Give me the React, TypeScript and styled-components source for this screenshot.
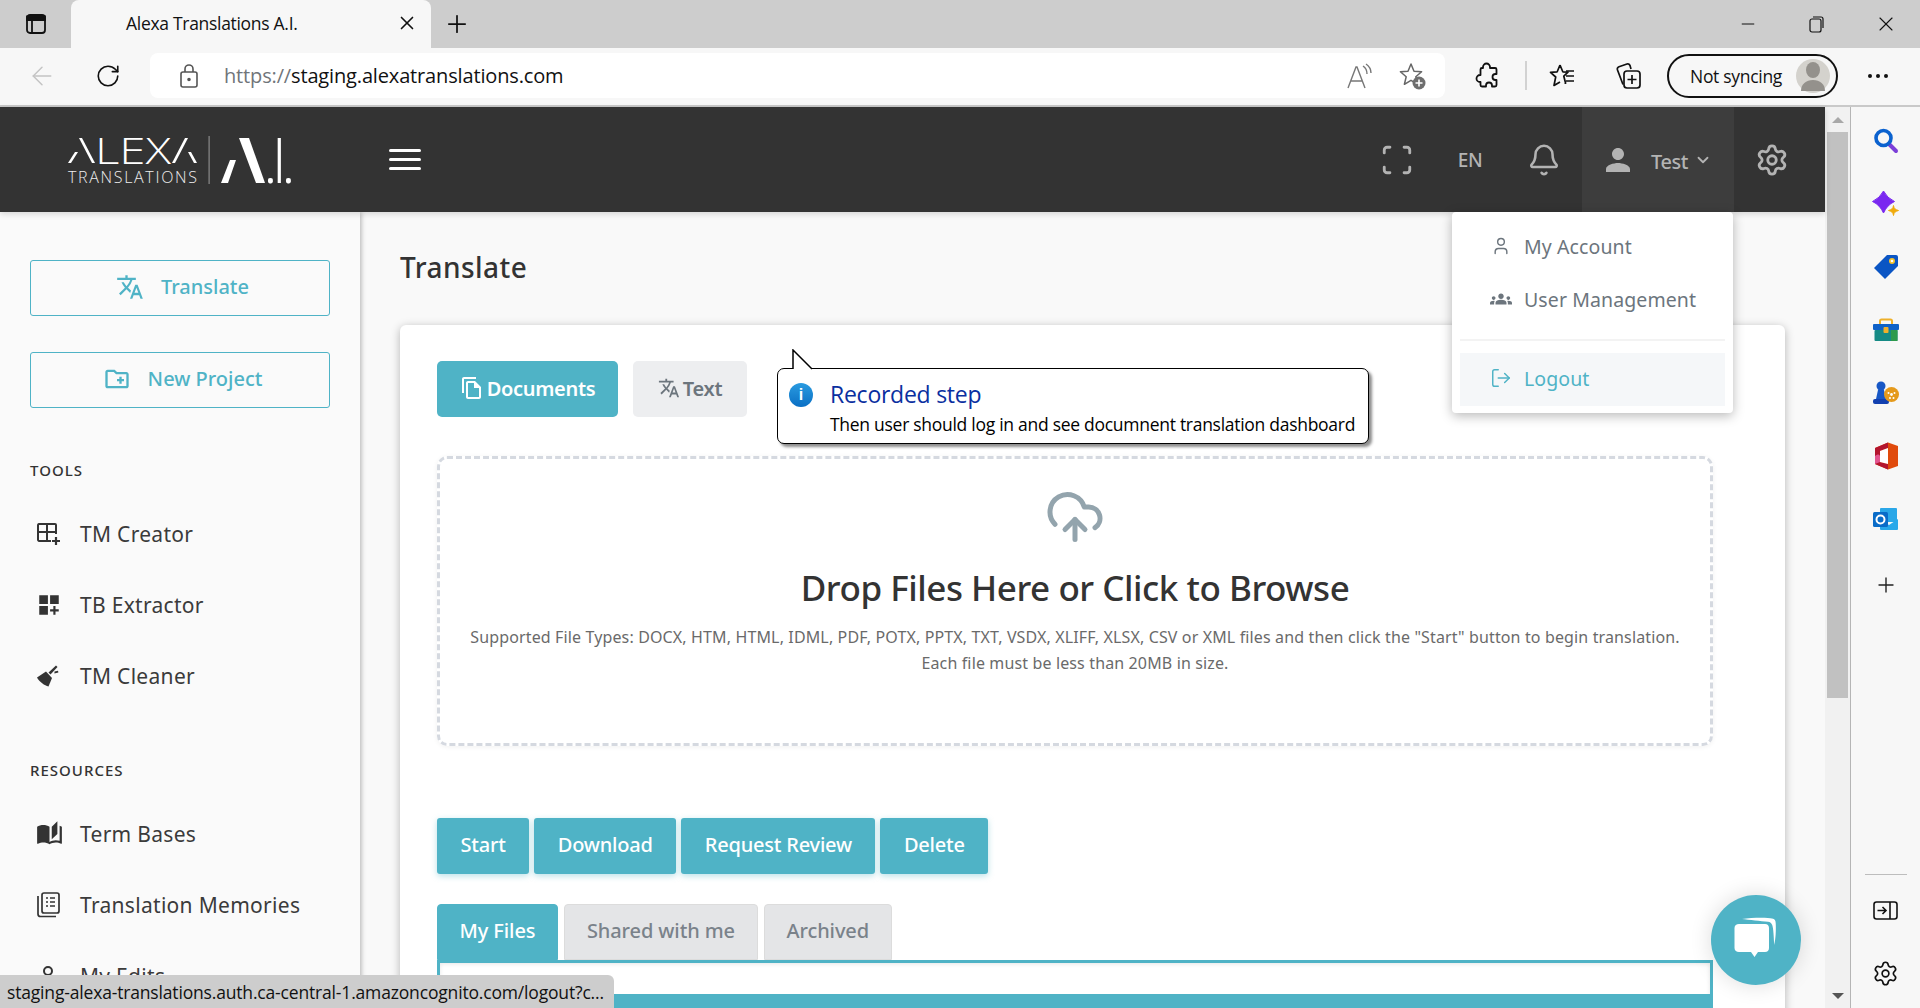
import React, { FC, ReactNode } from 'react'
import styled, { createGlobalStyle } from 'styled-components'
import { ArrowLeft, Bell, ChevronDown, CloudUpload, LogOut, Minus, Plus, RotateCw, Scan, Settings, User, X } from 'lucide-react'
import { MdAutoStories, MdDashboardCustomize, MdGroups, MdOutlineCreateNewFolder, MdOutlineFileCopy, MdPerson, MdTranslate } from 'react-icons/md'

const teal = '#4fb3c6'
const appFont = `'Noto Sans', 'Open Sans', sans-serif`
const chromeFont = `'Open Sans', 'Noto Sans', sans-serif`

const GlobalStyle = createGlobalStyle`
	html, body {
		margin: 0;
		padding: 0;
		overflow: hidden;
		background: #fff;
	}
	* {
		box-sizing: border-box;
	}
`

const Window = styled.div`
	position: relative;
	width: 1920px;
	height: 1008px;
	display: flex;
	flex-direction: column;
	overflow: hidden;
	font-family: ${appFont};
`

/* browser chrome */
const TabStrip = styled.div`
	height: 48px;
	flex: none;
	display: flex;
	align-items: center;
	background: #cdcdcd;
	color: #111;
`
const TabSwitcher = styled.div`
	width: 71px;
	display: flex;
	justify-content: center;
`
const ActiveTab = styled.div`
	width: 360px;
	height: 48px;
	display: flex;
	align-items: center;
	padding: 0 13px 2px 55px;
	background: #f7f7f7;
	border-radius: 8px 8px 0 0;
	font: 400 17.5px ${chromeFont};
	letter-spacing: -0.3px;
	justify-content: space-between;
`
const NewTab = styled.div`
	margin-left: 12px;
	display: flex;
`
const WindowControls = styled.div`
	margin-left: auto;
	display: flex;
	align-items: center;
`
const WindowControl = styled.div`
	width: 69px;
	display: flex;
	justify-content: center;
`
const Toolbar = styled.div`
	height: 59px;
	flex: none;
	display: flex;
	align-items: center;
	background: #f7f7f7;
	border-bottom: 2px solid #c9c9c9;
	padding-bottom: 2px;
	color: #111;
`
const ToolButton = styled.div<{ $w: number; $muted?: boolean }>`
	width: ${p => p.$w}px;
	flex: none;
	display: flex;
	justify-content: center;
	align-items: center;
	color: ${p => (p.$muted ? '#c4c4c4' : 'inherit')};
`
const AddressBar = styled.div`
	width: 1295px;
	height: 45px;
	flex: none;
	margin: 0 3px 0 18px;
	display: flex;
	align-items: center;
	background: #fff;
	border-radius: 8px;
	padding: 0 4px 0 29px;
`
const Url = styled.div`
	margin-left: 25px;
	font: 400 20px ${chromeFont};
	letter-spacing: -0.15px;
	color: #111;
	flex: 1;
	span {
		color: #70757a;
	}
`
const ToolDivider = styled.div`
	width: 2px;
	height: 29px;
	flex: none;
	background: #d2d2d2;
`
const ProfileButton = styled.div`
	width: 171px;
	height: 44px;
	flex: none;
	margin-left: 8px;
	display: flex;
	align-items: center;
	justify-content: space-between;
	padding: 0 6px 0 21px;
	border: 2px solid #111;
	border-radius: 22px;
	font: 400 17.5px ${chromeFont};
	letter-spacing: -0.3px;
`
const Avatar = styled.div`
	width: 34px;
	height: 34px;
	border-radius: 50%;
	background: #d4d2cd;
	display: flex;
	align-items: center;
	justify-content: center;
`
const Viewport = styled.div`
	flex: 1;
	min-height: 0;
	display: flex;
`
const PageArea = styled.div`
	flex: 1;
	min-width: 0;
	display: flex;
	flex-direction: column;
`

/* app header */
const AppHeader = styled.header`
	height: 105px;
	flex: none;
	display: flex;
	align-items: center;
	padding: 0 15px 0 60px;
	background: #333;
	color: #b3b3b3;
	z-index: 3;
	box-shadow: 0 2px 6px rgba(0, 0, 0, 0.15);
`
const LogoMark = styled.svg`
	overflow: visible;
	flex: none;
`
const MenuButton = styled.div`
	margin-left: 79px;
	width: 32px;
	display: flex;
	flex-direction: column;
	gap: 6px;
`
const MenuBar = styled.span`
	height: 3px;
	border-radius: 2px;
	background: #fff;
`
const HeaderRight = styled.div`
	margin-left: auto;
	display: flex;
	align-items: stretch;
	height: 100%;
`
const HeaderCell = styled.div<{ $w: number }>`
	width: ${p => p.$w}px;
	display: flex;
	align-items: center;
	justify-content: center;
`
const LangLabel = styled.span`
	font-size: 19px;
	font-weight: 500;
	letter-spacing: -0.3px;
`
const UserCell = styled.div`
	position: relative;
	width: 152px;
	display: flex;
	align-items: center;
	padding-left: 18px;
	background: #3d3d3d;
`
const UserName = styled.span`
	margin-left: 15px;
	margin-right: 6px;
	font-size: 20px;
	font-weight: 500;
	letter-spacing: -0.4px;
	padding-top: 3px;
`

/* user dropdown */
const UserMenu = styled.div`
	position: absolute;
	top: 100%;
	right: 1px;
	width: 281px;
	height: 201px;
	padding: 8px;
	background: #fff;
	border-radius: 4px;
	box-shadow: 0 3px 12px rgba(0, 0, 0, 0.28);
`
const UserMenuItem = styled.div<{ $accent?: boolean }>`
	height: 53px;
	display: flex;
	align-items: center;
	padding: 0 0 ${p => (p.$accent ? 3 : 1)}px 30px;
	gap: 12px;
	font-size: 19.5px;
	letter-spacing: 0.1px;
	color: ${p => (p.$accent ? teal : '#6c757d')};
	background: ${p => (p.$accent ? '#f5f7f9' : 'transparent')};
`
const UserMenuIcon = styled.span`
	width: 22px;
	display: flex;
	justify-content: center;
`
const UserMenuDivider = styled.div`
	height: 2px;
	background: #f3f3f3;
	margin: 13px 0 12px;
`

/* sidebar */
const Content = styled.div`
	flex: 1;
	min-height: 0;
	display: flex;
`
const Sidebar = styled.aside`
	width: 360px;
	flex: none;
	padding: 48px 30px 0;
	background: #fafafa;
	box-shadow: 1px 0 5px rgba(0, 0, 0, 0.3);
	z-index: 2;
`
const OutlineButton = styled.div`
	height: 56px;
	display: flex;
	align-items: center;
	justify-content: center;
	gap: 17px;
	margin-bottom: 36px;
	padding: 0 0 3px 5px;
	border: 1.5px solid ${teal};
	border-radius: 3px;
	color: ${teal};
	font-size: 20px;
	font-weight: 500;
`
const SectionLabel = styled.div<{ $top: number }>`
	height: 20px;
	line-height: 20px;
	margin: ${p => p.$top}px 0 18px;
	font-size: 15px;
	font-weight: 500;
	letter-spacing: 1px;
	color: #333;
`
const NavItem = styled.div`
	height: 71px;
	display: flex;
	align-items: center;
	font-size: 21px;
	letter-spacing: 0.3px;
	color: #3b3b3b;
`
const NavIcon = styled.span`
	width: 50px;
	padding-left: 6px;
	display: flex;
	align-items: center;
	color: #333;
`

/* main area */
const Main = styled.main`
	flex: 1;
	min-width: 0;
	padding: 36px 40px 0;
	background: #f9f9f9;
`
const PageTitle = styled.h1`
	margin: 0 0 39px;
	height: 38px;
	line-height: 38px;
	font-size: 28px;
	font-weight: 500;
	letter-spacing: 0.45px;
	color: #333;
`
const Card = styled.section`
	height: 800px;
	padding: 36px 72px 0 37px;
	background: #fff;
	border-radius: 6px;
	box-shadow: 0 2px 10px rgba(0, 0, 0, 0.28);
`
const TypeTabs = styled.div`
	display: flex;
	gap: 15px;
	margin-bottom: 39px;
`
const TypeTab = styled.div<{ $active?: boolean; $w: number }>`
	width: ${p => p.$w}px;
	height: 56px;
	display: flex;
	align-items: center;
	justify-content: center;
	gap: 3px;
	padding-bottom: 2px;
	border-radius: 5px;
	font-size: 20px;
	font-weight: 600;
	letter-spacing: -0.3px;
	color: ${p => (p.$active ? '#fff' : '#6c757d')};
	background: ${p => (p.$active ? teal : '#edeef0')};
`
const DropZone = styled.div`
	height: 290px;
	display: flex;
	flex-direction: column;
	align-items: center;
	padding-top: 28px;
	margin-bottom: 72px;
	border: 3px dashed #d5d9e0;
	border-radius: 10px;
	box-shadow: 0 1px 5px rgba(0, 0, 0, 0.06);
`
const UploadIcon = styled.div`
	height: 60px;
	display: flex;
	color: #93a4ad;
`
const DropTitle = styled.h2`
	margin: 19px 0 0;
	height: 44px;
	line-height: 44px;
	font-size: 35px;
	font-weight: 500;
	letter-spacing: -0.46px;
	color: #333;
`
const DropHint = styled.p`
	margin: 14px 0 0;
	font-size: 16px;
	line-height: 26px;
	letter-spacing: 0.135px;
	text-align: center;
	color: #6a6a6a;
`
const Actions = styled.div`
	display: flex;
	gap: 5px;
	margin-bottom: 30px;
`
const ActionButton = styled.div`
	height: 56px;
	display: flex;
	align-items: center;
	padding: 0 23.5px 3px;
	background: ${teal};
	border-radius: 3px;
	color: #fff;
	font-size: 20px;
	font-weight: 500;
	letter-spacing: -0.2px;
	box-shadow: 0 2px 6px rgba(79, 179, 198, 0.4);
`
const FileTabs = styled.div`
	display: flex;
	gap: 6px;
`
const FileTab = styled.div<{ $active?: boolean }>`
	height: 56px;
	display: flex;
	align-items: center;
	padding: 0 22px 3px 21.5px;
	border-radius: 4px 4px 0 0;
	font-size: 20px;
	font-weight: 500;
	letter-spacing: -0.1px;
	color: ${p => (p.$active ? '#fff' : '#7a828a')};
	background: ${p => (p.$active ? teal : '#e4e5e7')};
	border: 1px solid ${p => (p.$active ? teal : '#dcdcdc')};
`
const FilesPanel = styled.div`
	height: 60px;
	padding-top: 31px;
	border: 3px solid ${teal};
	border-bottom: 0;
	box-shadow: 0 1px 4px rgba(0, 0, 0, 0.1) inset;
`
const FilesHeader = styled.div`
	height: 40px;
	background: ${teal};
`

/* scrollbar and edge rail */
const Scrollbar = styled.div`
	width: 25px;
	flex: none;
	display: flex;
	flex-direction: column;
	align-items: center;
	background: #f1f1f1;
`
const ScrollArrow = styled.div<{ $down?: boolean }>`
	height: 25px;
	flex: none;
	display: flex;
	align-items: center;
	justify-content: center;
	&::after {
		content: '';
		border-left: 6px solid transparent;
		border-right: 6px solid transparent;
		${p => (p.$down ? 'border-top: 6px solid #555;' : 'border-bottom: 6px solid #a8a8a8;')}
	}
`
const ScrollThumb = styled.div`
	width: 21px;
	height: 566px;
	background: #c1c1c1;
`
const ScrollSpacer = styled.div`
	flex: 1;
`
const EdgeRail = styled.div`
	width: 70px;
	flex: none;
	display: flex;
	flex-direction: column;
	align-items: center;
	padding-top: 2px;
	background: #f7f7f7;
	border-left: 1px solid #b5b5b5;
`
const RailItem = styled.div`
	height: 63px;
	flex: none;
	display: flex;
	align-items: center;
	justify-content: center;
`
const RailPlus = styled(RailItem)`
	padding-top: 6px;
`
const RailBottom = styled.div`
	margin-top: auto;
	display: flex;
	flex-direction: column;
	align-items: center;
	padding-bottom: 3px;
`
const RailDivider = styled.div`
	width: 42px;
	height: 1px;
	margin-bottom: 4px;
	background: #bdbdbd;
`

/* overlays */
const Callout = styled.div`
	position: absolute;
	left: 777px;
	top: 368px;
	width: 592px;
	height: 76px;
	padding: 10px 0 0 52px;
	background: #fff;
	border: 1.5px solid #000;
	border-radius: 7px;
	box-shadow: 3px 3px 3px rgba(0, 0, 0, 0.45);
	font-family: ${chromeFont};
	z-index: 5;
`
const CalloutTail = styled.svg`
	position: absolute;
	left: 14px;
	top: -20px;
`
const CalloutBadge = styled.div`
	position: absolute;
	left: 11px;
	top: 14px;
	width: 24px;
	height: 24px;
	border-radius: 50%;
	display: flex;
	align-items: center;
	justify-content: center;
	background: linear-gradient(180deg, #2a9be0, #0a6fc4);
	color: #fff;
	font: 700 16px 'Liberation Sans', sans-serif;
`
const CalloutTitle = styled.div`
	font-size: 23px;
	line-height: 30px;
	letter-spacing: -0.25px;
	color: #0a2fa0;
`
const CalloutText = styled.div`
	margin-top: 3px;
	font-size: 17.5px;
	line-height: 24px;
	letter-spacing: -0.28px;
	color: #000;
`
const ChatBubble = styled.div`
	position: absolute;
	left: 1711px;
	top: 895px;
	width: 90px;
	height: 90px;
	border-radius: 50%;
	display: flex;
	align-items: center;
	justify-content: center;
	background: ${teal};
	box-shadow: 0 0 22px rgba(0, 0, 0, 0.14);
	z-index: 6;
`
const StatusBar = styled.div`
	position: absolute;
	left: 0;
	bottom: 0;
	width: 614px;
	height: 33px;
	display: flex;
	align-items: center;
	padding-left: 7px;
	background: #cdcdcd;
	border-radius: 0 6px 0 0;
	font: 400 17.5px ${chromeFont};
	letter-spacing: -0.17px;
	color: #111;
	white-space: nowrap;
	z-index: 7;
`

const Logo: FC = () => (
	<LogoMark width="250" height="70" viewBox="0 0 250 70">
		<g fill="#fff">
			<polygon points="8,38 11,38 18,27 15,27" />
			<polygon points="19,13 22,13 35,38 32,38" />
			<text x="35" y="38.5" fontFamily="'Open Sans', sans-serif" fontWeight="300" fontSize="36" textLength="76" lengthAdjust="spacingAndGlyphs">LEX</text>
			<polygon points="125,13 128,13 115,38 112,38" />
			<polygon points="128,27 131,27 137,38 134,38" />
			<polygon points="179,13 189,13 205,58 196,58" />
			<polygon points="170,35 176,35 168,58 161,58" />
			<text x="203 211.500 221" y="58" fontFamily="'Open Sans', sans-serif" fontWeight="300" fontSize="62">.I.</text>
		</g>
		<text x="8" y="58" fill="#eeeeee" fontFamily="'Open Sans', sans-serif" fontWeight="300" fontSize="16" textLength="129" lengthAdjust="spacing">TRANSLATIONS</text>
		<rect x="148.5" y="11" width="1.2" height="48" fill="#8a8a8a" />
	</LogoMark>
)

const TabSwitcherIcon: FC = () => (
	<svg width="22" height="22" viewBox="0 0 22 22" fill="none" stroke="#111" strokeWidth="1.8">
		<rect x="2" y="2" width="18" height="18" rx="3" />
		<path d="M2 3.5h18v3.5H2z" fill="#111" />
		<path d="M7 7v13" />
	</svg>
)

const RestoreIcon: FC = () => (
	<svg width="15" height="17" viewBox="0 0 15 17" fill="none" stroke="#111" strokeWidth="1.2">
		<rect x="1" y="3" width="11" height="13" rx="2" />
		<path d="M4 1h8a2 2 0 0 1 2 2v9" />
	</svg>
)

const LockIcon: FC = () => (
	<svg width="20" height="26" viewBox="0 0 20 26" fill="none" stroke="#555" strokeWidth="1.6">
		<rect x="2" y="9" width="16" height="15" rx="2" />
		<path d="M6 9V6a4 4 0 0 1 8 0v3" />
		<circle cx="10" cy="16.5" r="1" fill="#555" />
	</svg>
)

const ReadAloudIcon: FC = () => (
	<svg width="26" height="26" viewBox="0 0 26 26" fill="none" stroke="#777" strokeWidth="1.4">
		<path d="M1 25l8-21h1l8 21M4 18h11" />
		<path d="M16 3c3 2 4 5 4 8M19 1c3 2 5 6 5 9" />
	</svg>
)

const StarAddIcon: FC = () => (
	<svg width="28" height="28" viewBox="0 0 28 28" fill="none">
		<path d="M12 2l3 7.2 7.6.6-5.8 5 1.8 7.5L12 18.3l-6.6 4 1.8-7.5-5.800-5 7.600-.6z" stroke="#666" strokeWidth="1.5" strokeLinejoin="round" />
		<circle cx="20" cy="21" r="6.5" fill="#6e6e6e" />
		<path d="M20 17.5v7M16.5 21h7" stroke="#fff" strokeWidth="1.6" />
	</svg>
)

const PuzzleIcon: FC = () => (
	<svg width="24" height="28" viewBox="0 0 24 28" fill="none" stroke="#111" strokeWidth="1.8" strokeLinejoin="round">
		<path d="M8 6V5a3.500 3.500 0 0 1 7 0v1h5a1.500 1.500 0 0 1 1.500 1.500V12h-1a3 3 0 0 0 0 6h1v5a1.500 1.500 0 0 1-1.500 1.500h-3v-1a3 3 0 0 0-6 0v1H7a1.500 1.500 0 0 1-1.500-1.500v-3H5a3.500 3.500 0 0 1 0-7h.5V7.500A1.500 1.500 0 0 1 7 6z" />
	</svg>
)

const FavoritesIcon: FC = () => (
	<svg width="26" height="26" viewBox="0 0 26 26" fill="none" stroke="#111" strokeWidth="1.7" strokeLinejoin="round">
		<path d="M11 2l2.800 6.800 5.200.4-4.200 4 1.800 7-1-.5M11 2L8.200 8.800 1.500 9.400l5.200 4.600L5 22.500l6-3.600" />
		<path d="M17 8h8M17 13h8M17 18h8" />
	</svg>
)

const CollectionsIcon: FC = () => (
	<svg width="27" height="28" viewBox="0 0 27 28" fill="none" stroke="#111" strokeWidth="1.7">
		<path d="M8 22.500 2.500 8c-.5-1.500.2-2.800 1.500-3.300L12 2c1.500-.5 2.500.5 3 1.500L16 7" />
		<rect x="9" y="9" width="16" height="17" rx="3" />
		<path d="M17 13v9M12.500 17.500h9" />
	</svg>
)

const AvatarIcon: FC = () => (
	<svg width="26" height="30" viewBox="0 0 26 30" fill="#94918c">
		<ellipse cx="13" cy="9" rx="7" ry="8" />
		<path d="M1 30c0-7 5-11 12-11s12 4 12 11z" />
	</svg>
)

const TableAddIcon: FC = () => (
	<svg width="25" height="24" viewBox="0 0 25 24" fill="none" stroke="#333" strokeWidth="2">
		<path d="M15 19H3a1.500 1.500 0 0 1-1-1V3a1.500 1.500 0 0 1 1-1h16a1 1 0 0 1 1 1v9" />
		<path d="M2 10h18M11 3v15" />
		<path d="M20 15v8M16 19h8" strokeWidth="2.2" />
	</svg>
)

const BroomIcon: FC = () => (
	<svg width="24" height="24" viewBox="0 0 24 24" fill="#333">
		<path d="M1 13.500 10 7.500l6 6.500-3.500 8.500c-4-1-9-4.500-11.500-9z" />
		<path d="M12.500 8.500 20 1.500l1.500 1.500-7 7.500z" />
		<path d="M18.500 7.500l3.500-.8.400 1.800-4 1z" />
	</svg>
)

const MemoriesIcon: FC = () => (
	<svg width="24" height="26" viewBox="0 0 24 26" fill="none" stroke="#333" strokeWidth="1.7">
		<path d="M2 4v18a2.500 2.500 0 0 0 2.500 2.500H20" />
		<rect x="6" y="1" width="17" height="20" rx="2" />
		<path d="M10 6h2M14 6h5M10 10h2M14 10h5M10 14h2M14 14h5" />
	</svg>
)

const SearchRailIcon: FC = () => (
	<svg width="26" height="26" viewBox="0 0 26 26" fill="none">
		<path d="M16 16l7 7" stroke="#7b3fd8" strokeWidth="4" strokeLinecap="round" />
		<circle cx="10.500" cy="10" r="7.500" stroke="#0b62cf" strokeWidth="3.600" />
	</svg>
)

const SparkleRailIcon: FC = () => (
	<svg width="28" height="28" viewBox="0 0 28 28">
		<path d="M11.500 1Q15 8 22.500 11.500 15 15 11.500 23 8 15 .5 11.500 8 8 11.500 1z" fill="#7a28f0" stroke="#7a28f0" strokeLinejoin="round" />
		<path d="M21.500 15.500c.5 3 1.500 4 5 5-3.500 1-4.500 2-5 5-.5-3-1.500-4-5-5 3.500-1 4.500-2 5-5z" fill="#f0ab0c" stroke="#f0ab0c" strokeLinejoin="round" />
	</svg>
)

const TagRailIcon: FC = () => (
	<svg width="26" height="26" viewBox="0 0 26 26">
		<path d="M14 1h9a2 2 0 0 1 2 2v9L12 25 1 14z" fill="#0a55c4" />
		<circle cx="19" cy="7" r="3" fill="#f6c22a" />
		<circle cx="19" cy="7" r="1.300" fill="#fff" />
	</svg>
)

const ToolboxRailIcon: FC = () => (
	<svg width="28" height="24" viewBox="0 0 28 24">
		<path d="M8 6V3a1.500 1.500 0 0 1 1.500-1.500h9A1.500 1.500 0 0 1 20 3v3" fill="none" stroke="#eeb02a" strokeWidth="2" />
		<rect x="1" y="6" width="26" height="6" rx="1" fill="#0f62c8" />
		<rect x="2.500" y="12" width="23" height="11" rx="1" fill="#158a85" />
		<rect x="19" y="12" width="6.500" height="11" fill="#2d9a4c" />
		<rect x="11.500" y="9" width="5" height="6" rx="1" fill="#f2b02a" />
	</svg>
)

const ChessRailIcon: FC = () => (
	<svg width="28" height="26" viewBox="0 0 28 26">
		<circle cx="9" cy="6" r="4.500" fill="#1757c6" />
		<path d="M6 10h6l2 9H4z" fill="#1757c6" />
		<rect x="1" y="19" width="16" height="5" rx="2" fill="#1240b0" />
		<circle cx="19.500" cy="14.500" r="7.500" fill="#e59a1c" />
		<circle cx="19.500" cy="14.500" r="1.400" fill="#fff" />
		<circle cx="16.500" cy="13" r="1" fill="#fff" />
		<circle cx="22.500" cy="13" r="1" fill="#fff" />
		<circle cx="18" cy="18" r="1" fill="#fff" />
		<circle cx="21.500" cy="18" r="1" fill="#fff" />
	</svg>
)

const OfficeRailIcon: FC = () => (
	<svg width="24" height="28" viewBox="0 0 24 28">
		<path d="M1 6l13-5.500L24 4v20l-10 3.500L1 22z" fill="#e04a0c" />
		<path d="M1 6l13-5.500V6L6 9v11l8 2v5.500L1 22z" fill="#b3152e" />
		<path d="M1 14c2-2 4-2 5 0v6l-5 2z" fill="#e2558f" />
		<path d="M6 9l8-3v16l-8-2z" fill="#fff" />
	</svg>
)

const OutlookRailIcon: FC = () => (
	<svg width="26" height="24" viewBox="0 0 26 24">
		<rect x="7" y="1" width="17" height="14" rx="1" fill="#2aa7e8" />
		<path d="M7 12l9 6 9-6v10a1 1 0 0 1-1 1H8a1 1 0 0 1-1-1z" fill="#28a8ea" />
		<rect x="0" y="5" width="15" height="15" rx="1.500" fill="#0a6cc8" />
		<circle cx="7.500" cy="12.500" r="4" fill="none" stroke="#fff" strokeWidth="2" />
	</svg>
)

const SplitRailIcon: FC = () => (
	<svg width="25" height="19" viewBox="0 0 25 19" fill="none" stroke="#111" strokeWidth="1.600">
		<rect x="1" y="1" width="23" height="17" rx="2.500" />
		<path d="M17 1v17" />
		<path d="M4.500 9.500h8M9.500 6l3.500 3.500L9.500 13" />
	</svg>
)

const ChatIcon: FC = () => (
	<svg width="50" height="50" viewBox="0 0 50 50" fill="#fff">
		<path d="M11 4c10-1.500 26-1.500 30-.5 3 .5 3.500 2 3.700 4.500.4 7 0 16-1.500 22-.4-8-.8-17-2-20-.8-2-2-3-4.200-3.200C30 6 18 5 11 4z" />
		<path d="M8 9h26c2.500 0 4 1.500 4 4v20c0 2.500-1.500 4-4 4h-7l-3.500 5-3.500-5H8c-2.500 0-4.500-1.500-4.500-4V13C3.500 10.500 5.500 9 8 9z" />
	</svg>
)

type NavEntry = { icon: ReactNode; label: string }

const NavList: FC<{ items: NavEntry[] }> = ({ items }) => (
	<>
		{items.map(item => (
			<NavItem key={item.label}>
				<NavIcon>{item.icon}</NavIcon>
				{item.label}
			</NavItem>
		))}
	</>
)

const tools: NavEntry[] = [
	{ icon: <TableAddIcon />, label: 'TM Creator' },
	{ icon: <MdDashboardCustomize size={26} />, label: 'TB Extractor' },
	{ icon: <BroomIcon />, label: 'TM Cleaner' },
]

const resources: NavEntry[] = [
	{ icon: <MdAutoStories size={27} />, label: 'Term Bases' },
	{ icon: <MemoriesIcon />, label: 'Translation Memories' },
	{ icon: <User size={24} strokeWidth={2} />, label: 'My Edits' },
]

const railIcons = [
	<SearchRailIcon key="search" />,
	<SparkleRailIcon key="sparkle" />,
	<TagRailIcon key="tag" />,
	<ToolboxRailIcon key="toolbox" />,
	<ChessRailIcon key="chess" />,
	<OfficeRailIcon key="office" />,
	<OutlookRailIcon key="outlook" />,
]

export default function App() {
	return (
		<Window>
			<GlobalStyle />
			<TabStrip>
				<TabSwitcher><TabSwitcherIcon /></TabSwitcher>
				<ActiveTab>
					Alexa Translations A.I.
					<X size={22} strokeWidth={1.8} />
				</ActiveTab>
				<NewTab><Plus size={28} strokeWidth={1.5} /></NewTab>
				<WindowControls>
					<WindowControl><Minus size={20} strokeWidth={1.2} /></WindowControl>
					<WindowControl><RestoreIcon /></WindowControl>
					<WindowControl><X size={24} strokeWidth={1.1} /></WindowControl>
				</WindowControls>
			</TabStrip>
			<Toolbar>
				<ToolButton $w={84} $muted><ArrowLeft size={30} strokeWidth={1.2} /></ToolButton>
				<ToolButton $w={48}><RotateCw size={26} strokeWidth={1.5} /></ToolButton>
				<AddressBar>
					<LockIcon />
					<Url><span>https://</span>staging.alexatranslations.com</Url>
					<ToolButton $w={51}><ReadAloudIcon /></ToolButton>
					<ToolButton $w={56}><StarAddIcon /></ToolButton>
				</AddressBar>
				<ToolButton $w={77}><PuzzleIcon /></ToolButton>
				<ToolDivider />
				<ToolButton $w={70}><FavoritesIcon /></ToolButton>
				<ToolButton $w={62}><CollectionsIcon /></ToolButton>
				<ProfileButton>
					Not syncing
					<Avatar><AvatarIcon /></Avatar>
				</ProfileButton>
				<ToolButton $w={80}>
					<svg width="22" height="6" viewBox="0 0 22 6" fill="#111">
						<circle cx="3" cy="3" r="2" />
						<circle cx="11" cy="3" r="2" />
						<circle cx="19" cy="3" r="2" />
					</svg>
				</ToolButton>
			</Toolbar>
			<Viewport>
				<PageArea>
					<AppHeader>
						<Logo />
						<MenuButton>
							<MenuBar />
							<MenuBar />
							<MenuBar />
						</MenuButton>
						<HeaderRight>
							<HeaderCell $w={74}><Scan size={34} strokeWidth={2} /></HeaderCell>
							<HeaderCell $w={72}><LangLabel>EN</LangLabel></HeaderCell>
							<HeaderCell $w={76}><Bell size={34} strokeWidth={1.8} /></HeaderCell>
							<UserCell>
								<MdPerson size={36} />
								<UserName>Test</UserName>
								<ChevronDown size={18} strokeWidth={2.4} />
								<UserMenu>
									<UserMenuItem>
										<UserMenuIcon><User size={20} strokeWidth={1.7} /></UserMenuIcon>
										My Account
									</UserMenuItem>
									<UserMenuItem>
										<UserMenuIcon><MdGroups size={24} /></UserMenuIcon>
										User Management
									</UserMenuItem>
									<UserMenuDivider />
									<UserMenuItem $accent>
										<UserMenuIcon><LogOut size={22} strokeWidth={1.6} /></UserMenuIcon>
										Logout
									</UserMenuItem>
								</UserMenu>
							</UserCell>
							<HeaderCell $w={76}><Settings size={34} strokeWidth={2} /></HeaderCell>
						</HeaderRight>
					</AppHeader>
					<Content>
						<Sidebar>
							<OutlineButton><MdTranslate size={28} />Translate</OutlineButton>
							<OutlineButton><MdOutlineCreateNewFolder size={28} />New Project</OutlineButton>
							<SectionLabel $top={52}>TOOLS</SectionLabel>
							<NavList items={tools} />
							<SectionLabel $top={49}>RESOURCES</SectionLabel>
							<NavList items={resources} />
						</Sidebar>
						<Main>
							<PageTitle>Translate</PageTitle>
							<Card>
								<TypeTabs>
									<TypeTab $active $w={181}><MdOutlineFileCopy size={24} />Documents</TypeTab>
									<TypeTab $w={114}><MdTranslate size={22} />Text</TypeTab>
								</TypeTabs>
								<DropZone>
									<UploadIcon><CloudUpload size={60} strokeWidth={2} /></UploadIcon>
									<DropTitle>Drop Files Here or Click to Browse</DropTitle>
									<DropHint>
										Supported File Types: DOCX, HTM, HTML, IDML, PDF, POTX, PPTX, TXT, VSDX, XLIFF, XLSX, CSV or XML files and then click the "Start" button to begin translation.
										<br />
										Each file must be less than 20MB in size.
									</DropHint>
								</DropZone>
								<Actions>
									<ActionButton>Start</ActionButton>
									<ActionButton>Download</ActionButton>
									<ActionButton>Request Review</ActionButton>
									<ActionButton>Delete</ActionButton>
								</Actions>
								<FileTabs>
									<FileTab $active>My Files</FileTab>
									<FileTab>Shared with me</FileTab>
									<FileTab>Archived</FileTab>
								</FileTabs>
								<FilesPanel><FilesHeader /></FilesPanel>
							</Card>
						</Main>
					</Content>
				</PageArea>
				<Scrollbar>
					<ScrollArrow />
					<ScrollThumb />
					<ScrollSpacer />
					<ScrollArrow $down />
				</Scrollbar>
				<EdgeRail>
					{railIcons.map((icon, i) => <RailItem key={i}>{icon}</RailItem>)}
					<RailPlus><Plus size={24} strokeWidth={1.4} color="#222" /></RailPlus>
					<RailBottom>
						<RailDivider />
						<RailItem><SplitRailIcon /></RailItem>
						<RailItem><Settings size={27} strokeWidth={1.5} color="#111" /></RailItem>
					</RailBottom>
				</EdgeRail>
			</Viewport>
			<Callout>
				<CalloutTail width="24" height="22" viewBox="0 0 24 22">
					<path d="M1 21V1l20 20z" fill="#fff" />
					<path d="M1 20V1l19 19" fill="none" stroke="#000" strokeWidth="1.5" />
				</CalloutTail>
				<CalloutBadge>i</CalloutBadge>
				<CalloutTitle>Recorded step</CalloutTitle>
				<CalloutText>Then user should log in and see documnent translation dashboard</CalloutText>
			</Callout>
			<ChatBubble><ChatIcon /></ChatBubble>
			<StatusBar>staging-alexa-translations.auth.ca-central-1.amazoncognito.com/logout?c...</StatusBar>
		</Window>
	)
}
